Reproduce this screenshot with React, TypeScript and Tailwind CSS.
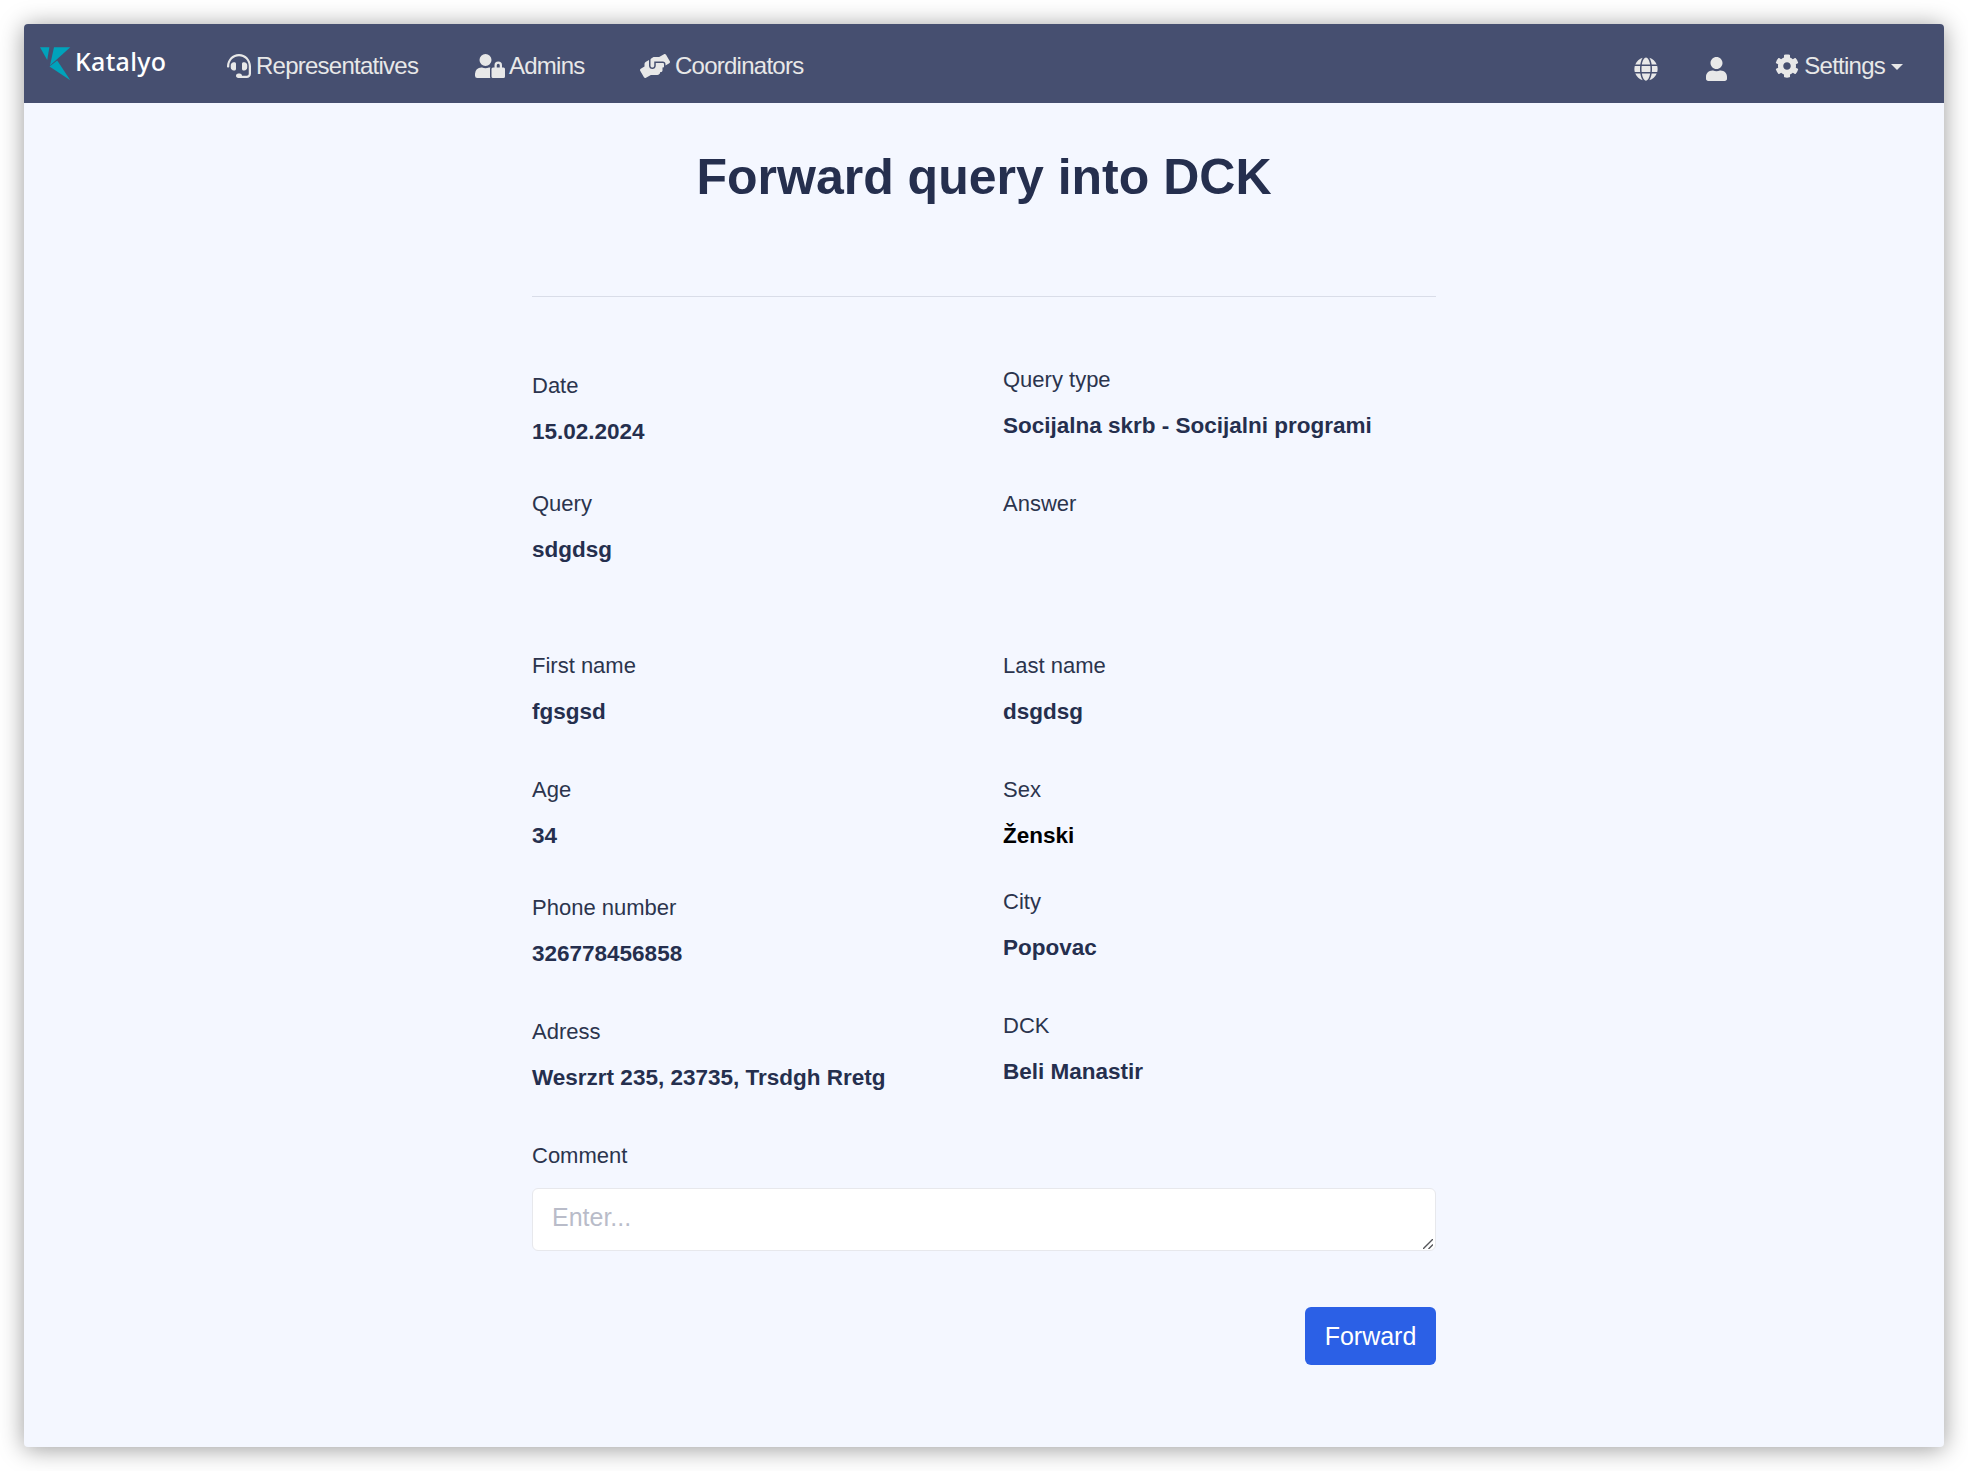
import React from "react";
import { FaHeadset, FaHandsHelping, FaGlobe, FaUser, FaCog } from "react-icons/fa";

type FieldData = { label: string; value?: string; className: string; valueClass?: string };

const leftFields: FieldData[] = [
  { label: "Date", value: "15.02.2024", className: "mt-[6px]" },
  { label: "Query", value: "sdgdsg", className: "mt-[39px]" },
  { label: "First name", value: "fgsgsd", className: "mt-[83px]" },
  { label: "Age", value: "34", className: "mt-[45px]" },
  { label: "Phone number", value: "326778456858", className: "mt-[39px]" },
  { label: "Adress", value: "Wesrzrt 235, 23735, Trsdgh Rretg", className: "mt-[45px]" },
];

const rightFields: FieldData[] = [
  { label: "Query type", value: "Socijalna skrb - Socijalni programi", className: "" },
  { label: "Answer", className: "mt-[45px]" },
  { label: "Last name", value: "dsgdsg", className: "mt-[83px]" },
  { label: "Sex", value: "Ženski", className: "mt-[45px]", valueClass: "text-black" },
  { label: "City", value: "Popovac", className: "mt-[33px]" },
  { label: "DCK", value: "Beli Manastir", className: "mt-[45px]" },
];

function Field({ label, value, className, valueClass = "text-[#252f4e]" }: FieldData) {
  return (
    <div className={`h-[79px] whitespace-nowrap ${className}`}>
      <div className="text-[22px] leading-[33px] text-[#2b344d]">{label}</div>
      <div className={`mt-[13px] text-[22.5px] leading-[34px] font-bold ${valueClass}`}>{value}</div>
    </div>
  );
}

function Logo() {
  return (
    <div className="flex items-start">
      <svg width="31" height="34" viewBox="0 0 31 34" fill="#00a3bb">
        <path d="M0 0.300H9.400L7.200 13Z" />
        <path d="M14 0.300H30.300L10 18.500Z" />
        <path d="M9.500 19.500L17.200 13.500L30.300 33.300Z" />
      </svg>
      <span className="-mt-[3px] ml-[4px] text-[25px] leading-[34px] font-medium tracking-[0.3px] text-white font-['Noto_Sans',sans-serif]">
        Katalyo
      </span>
    </div>
  );
}

/* User silhouette with a solid padlock */
function UserLockIcon() {
  return (
    <svg className="mt-[7px] mr-[4px] h-6 w-[30px]" viewBox="0 0 640 512" fill="currentColor">
      <path d="M224 256A128 128 0 1 0 96 128a128 128 0 0 0 128 128zm96 64a63.080 63.080 0 0 1 8.100-30.500c-4.800-.5-9.500-1.500-14.500-1.500h-16.700a174.080 174.080 0 0 1-145.800 0h-16.700A134.430 134.430 0 0 0 0 422.400V464a48 48 0 0 0 48 48h280.900a63.540 63.540 0 0 1-8.900-32z" />
      <path fillRule="evenodd" d="M608 288h-32v-48a80 80 0 0 0-160 0v48h-32a32 32 0 0 0-32 32v160a32 32 0 0 0 32 32h224a32 32 0 0 0 32-32V320a32 32 0 0 0-32-32zM528 288h-64v-48a32 32 0 0 1 64 0z" />
    </svg>
  );
}

export default function App() {
  return (
    <div className="h-[1471px] w-[1968px] bg-white p-6 font-['Liberation_Sans',Arial,sans-serif]">
      <div className="h-[1423px] rounded-[4px] bg-[#f4f7ff] shadow-[0_2px_24px_rgba(0,0,0,0.4)]">
        <nav className="flex h-[79px] rounded-t-[4px] bg-[#464f70] pl-4 text-[24px] leading-[38px] tracking-[-0.75px] text-[#e8e8e8]">
          <div className="mt-[23px] w-[187px]">
            <Logo />
          </div>
          <a className="mt-[23px] flex w-[248px]">
            <FaHeadset className="mt-[7px] mr-[5px] size-6" />
            Representatives
          </a>
          <a className="mt-[23px] flex w-[165px]">
            <UserLockIcon />
            Admins
          </a>
          <a className="mt-[23px] flex">
            <FaHandsHelping className="mt-[7px] mr-[5px] h-6 w-[30px]" />
            Coordinators
          </a>
          <div className="mt-[23px] mr-[41px] ml-auto flex">
            <FaGlobe className="mt-[10px] mr-[48px] size-6" />
            <FaUser className="mt-[10px] mr-[48px] h-6 w-[21px]" />
            <FaCog className="mt-[7px] mr-[5px] size-6" />
            <span>Settings</span>
            <span className="mt-[17px] ml-[6px] h-0 w-0 border-x-[6px] border-t-[6px] border-x-transparent border-t-[#e8e8e8]" />
          </div>
        </nav>
        <main className="mx-auto w-[904px]">
          <h1 className="pt-[44px] text-center text-[50px] leading-[60px] font-bold text-[#252f4e]">Forward query into DCK</h1>
          <hr className="mt-[89px] border-t border-[#d9dde8]" />
          <div className="flex pt-[66px]">
            <div className="w-[471px]">
              {leftFields.map((f) => (
                <Field key={f.label} {...f} />
              ))}
            </div>
            <div>
              {rightFields.map((f) => (
                <Field key={f.label} {...f} />
              ))}
            </div>
          </div>
          <label className="mt-[45px] block text-[22px] leading-[33px] text-[#2b344d]">Comment</label>
          <div className="relative mt-4">
            <textarea
              placeholder="Enter..."
              className="block h-[63px] w-full resize-none rounded-[6px] border border-[#e7e8ec] bg-white px-[19px] py-[9px] text-[25px] leading-[38px] placeholder:text-[#b9bcc9]"
            />
            <svg className="pointer-events-none absolute right-[3px] bottom-[2px]" width="10" height="10" viewBox="0 0 10 10" stroke="#55565a" strokeWidth="1.4">
              <path d="M0 10L10 0M5.500 10L10 5.500" />
            </svg>
          </div>
          <button className="mt-14 ml-auto block h-[58px] w-[131px] rounded-[6px] bg-[#2b60e6] pb-px text-[25px] leading-[38px] text-white">Forward</button>
        </main>
      </div>
    </div>
  );
}
